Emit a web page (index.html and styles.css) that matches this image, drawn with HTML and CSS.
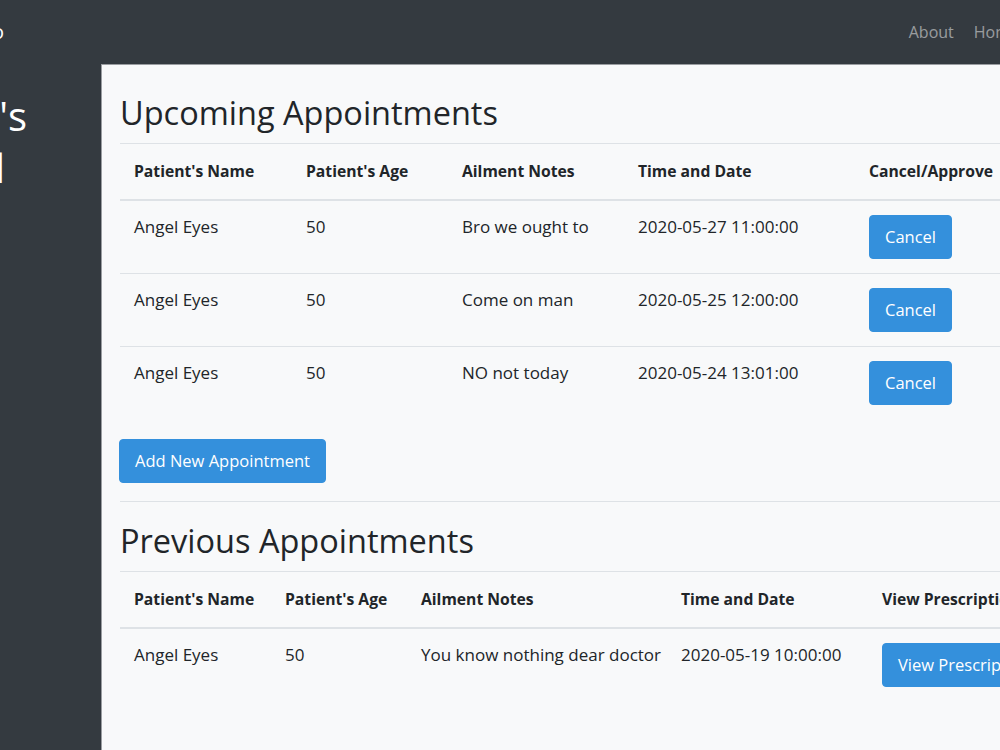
FILE: index.html
```html
<!DOCTYPE html>
<html lang="en">
<head>
<meta charset="utf-8">
<title>Doctor's Panel</title>
<link rel="stylesheet" href="styles.css">
</head>
<body>
<nav class="navbar">
  <div class="brand">Medico</div>
  <ul class="nav-links">
    <li><a class="nav-link" href="#">About</a></li>
    <li><a class="nav-link" href="#">Home</a></li>
  </ul>
</nav>
<div class="layout">
  <aside class="sidebar">
    <h2 class="side-title"><span class="side-line one">Doctor's</span><span class="side-line two">Portal</span></h2>
  </aside>
  <main class="panel">
    <h2 class="section-title">Upcoming Appointments</h2>
    <table class="table upcoming">
      <thead>
        <tr>
          <th class="c1">Patient's Name</th>
          <th class="c2">Patient's Age</th>
          <th class="c3">Ailment Notes</th>
          <th class="c4">Time and Date</th>
          <th class="c5">Cancel/Approve</th>
        </tr>
      </thead>
      <tbody>
        <tr>
          <td>Angel Eyes</td><td>50</td><td>Bro we ought to</td><td>2020-05-27 11:00:00</td>
          <td><button class="btn">Cancel</button></td>
        </tr>
        <tr>
          <td>Angel Eyes</td><td>50</td><td>Come on man</td><td>2020-05-25 12:00:00</td>
          <td><button class="btn">Cancel</button></td>
        </tr>
        <tr>
          <td>Angel Eyes</td><td>50</td><td>NO not today</td><td>2020-05-24 13:01:00</td>
          <td><button class="btn">Cancel</button></td>
        </tr>
      </tbody>
    </table>
    <button class="btn add-btn">Add New Appointment</button>
    <hr class="divider">
    <h2 class="section-title">Previous Appointments</h2>
    <table class="table previous">
      <thead>
        <tr>
          <th class="p1">Patient's Name</th>
          <th class="p2">Patient's Age</th>
          <th class="p3">Ailment Notes</th>
          <th class="p4">Time and Date</th>
          <th class="p5">View Prescription</th>
        </tr>
      </thead>
      <tbody>
        <tr>
          <td>Angel Eyes</td><td>50</td><td>You know nothing dear doctor</td><td>2020-05-19 10:00:00</td>
          <td><button class="btn">View Prescription</button></td>
        </tr>
      </tbody>
    </table>
  </main>
</div>
</body>
</html>
```
FILE: styles.css
```css
html, body {
  margin: 0;
  padding: 0;
}
body {
  width: 1000px;
  height: 750px;
  overflow: hidden;
  background: #343a40;
  font-family: "Open Sans", "Liberation Sans", sans-serif;
  font-size: 16px;
  line-height: 24px;
  color: #212529;
}
.navbar {
  height: 64px;
  display: flex;
  align-items: center;
  justify-content: space-between;
  box-sizing: border-box;
}
.brand {
  color: #fff;
  font-size: 20px;
  margin-left: -64px;
}
.nav-links {
  list-style: none;
  display: flex;
  margin: 0;
  padding: 0;
  margin-right: -29px;
}
.nav-link {
  display: block;
  padding: 0 10px;
  color: rgba(255, 255, 255, 0.5);
  text-decoration: none;
}
.layout {
  display: flex;
  height: 686px;
}
.sidebar {
  width: 101px;
  flex: none;
  overflow: hidden;
}
.side-title {
  margin: 26px 0 0 -193px;
  width: 220px;
  text-align: right;
  color: #fff;
  font-size: 40px;
  font-weight: 400;
  line-height: 52px;
}
.side-line {
  display: block;
}
.side-line.two {
  padding-right: 22px;
}
.panel {
  flex: 1;
  min-width: 0;
  background: #f8f9fa;
  border-top: 1px solid #9a9da1;
  border-left: 1px solid #9a9da1;
  padding: 26px 18px 0 18px;
  overflow: hidden;
}
.section-title {
  margin: 0 0 8px 0;
  font-size: 32.5px;
  font-weight: 400;
  line-height: 44px;
  white-space: nowrap;
}
.table {
  border-collapse: collapse;
  table-layout: fixed;
  margin-bottom: 20px;
  white-space: nowrap;
}
.table th,
.table td {
  text-align: left;
  vertical-align: top;
  border-top: 1px solid #dee2e6;
}
.table th {
  padding: 15px 14px 16px 14px;
  font-size: 15.7px;
  font-weight: 700;
  border-bottom: 2px solid #dee2e6;
}
.table td {
  padding: 14px 14px 14px 14px;
  font-size: 17px;
}
.upcoming { width: 1000px; }
.c1 { width: 144px; }
.c2 { width: 128px; }
.c3 { width: 148px; }
.c4 { width: 203px; }
.c5 { width: 237px; }
.previous { width: 1000px; }
.p1 { width: 123px; }
.p2 { width: 108px; }
.p3 { width: 232px; }
.p4 { width: 173px; }
.p5 { width: 224px; }
.btn {
  display: inline-block;
  font-family: inherit;
  font-size: 16.5px;
  line-height: 24px;
  padding: 9px 15px;
  color: #fff;
  background: #3490dc;
  border: 1px solid #3490dc;
  border-radius: 4px;
}
.add-btn {
  display: block;
  margin-left: -1px;
}
.divider {
  border: 0;
  border-top: 1px solid #dee2e6;
  margin: 18px -18px 17px 0;
}
```
